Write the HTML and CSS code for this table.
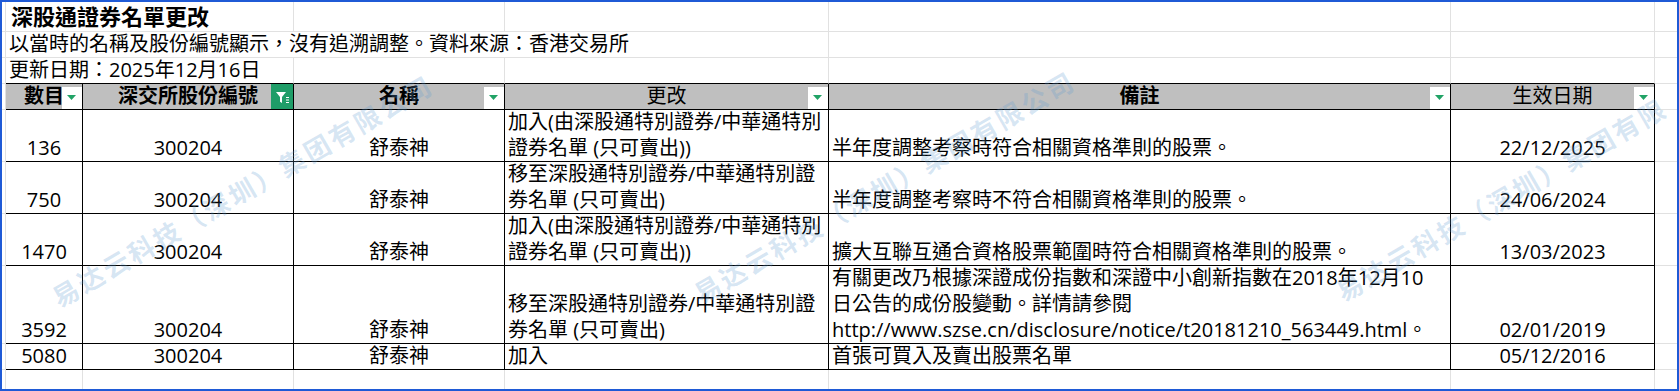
FILE: index.html
```html
<!DOCTYPE html>
<html>

<head>
    <meta charset="utf-8">
    <link rel="stylesheet" href="styles.css">
</head>

<body>

    <div class="sheet">
        <div class="grid">
            <!-- row 1 -->
            <div class="cell gut"></div>
            <div class="cell title span2">深股通證券名單更改</div>
            <div class="cell"></div>
            <div class="cell"></div>
            <div class="cell"></div>
            <div class="cell"></div>
            <div class="cell edge"></div>

            <!-- row 2 -->
            <div class="cell gut"></div>
            <div class="cell span4">以當時的名稱及股份編號顯示，沒有追溯調整。資料來源：香港交易所</div>
            <div class="cell"></div>
            <div class="cell"></div>
            <div class="cell edge"></div>

            <!-- row 3 -->
            <div class="cell gut"></div>
            <div class="cell under span2">更新日期：2025年12月16日</div>
            <div class="cell under"></div>
            <div class="cell under"></div>
            <div class="cell under"></div>
            <div class="cell under"></div>
            <div class="cell edge"></div>

            <!-- header -->
            <div class="cell gut"></div>
            <div class="cell tbl hd">數目<span class="drop"><svg width="10" height="6"><path d="M0 0h9l-4.5 5z" fill="#21a366"/></svg></span></div>
            <div class="cell tbl hd">深交所股份編號<span class="drop on"><svg width="22" height="25"><path d="M5 8h10l-4 5v6l-2-1.2V13z" fill="#fff"/><path d="M15 13.5h3M15 16h3M15 18.5h3" stroke="#fff" stroke-width="1"/></svg></span></div>
            <div class="cell tbl hd">名稱<span class="drop"><svg width="10" height="6"><path d="M0 0h9l-4.5 5z" fill="#21a366"/></svg></span></div>
            <div class="cell tbl hd plain">更改<span class="drop"><svg width="10" height="6"><path d="M0 0h9l-4.5 5z" fill="#21a366"/></svg></span></div>
            <div class="cell tbl hd">備註<span class="drop"><svg width="10" height="6"><path d="M0 0h9l-4.5 5z" fill="#21a366"/></svg></span></div>
            <div class="cell tbl hd plain">生效日期<span class="drop"><svg width="10" height="6"><path d="M0 0h9l-4.5 5z" fill="#21a366"/></svg></span></div>
            <div class="cell edge"></div>

            <!-- data -->
            <div class="cell gut"></div>
            <div class="cell tbl ctr">136</div>
            <div class="cell tbl ctr">300204</div>
            <div class="cell tbl ctr">舒泰神</div>
            <div class="cell tbl">加入(由深股通特別證券/中華通特別<br>證券名單 (只可賣出))</div>
            <div class="cell tbl">半年度調整考察時符合相關資格準則的股票。</div>
            <div class="cell tbl ctr">22/12/2025</div>
            <div class="cell edge"></div>

            <div class="cell gut"></div>
            <div class="cell tbl ctr">750</div>
            <div class="cell tbl ctr">300204</div>
            <div class="cell tbl ctr">舒泰神</div>
            <div class="cell tbl">移至深股通特別證券/中華通特別證<br>券名單 (只可賣出)</div>
            <div class="cell tbl">半年度調整考察時不符合相關資格準則的股票。</div>
            <div class="cell tbl ctr">24/06/2024</div>
            <div class="cell edge"></div>

            <div class="cell gut"></div>
            <div class="cell tbl ctr">1470</div>
            <div class="cell tbl ctr">300204</div>
            <div class="cell tbl ctr">舒泰神</div>
            <div class="cell tbl">加入(由深股通特別證券/中華通特別<br>證券名單 (只可賣出))</div>
            <div class="cell tbl">擴大互聯互通合資格股票範圍時符合相關資格準則的股票。</div>
            <div class="cell tbl ctr">13/03/2023</div>
            <div class="cell edge"></div>

            <div class="cell gut"></div>
            <div class="cell tbl ctr">3592</div>
            <div class="cell tbl ctr">300204</div>
            <div class="cell tbl ctr">舒泰神</div>
            <div class="cell tbl">移至深股通特別證券/中華通特別證<br>券名單 (只可賣出)</div>
            <div class="cell tbl">有關更改乃根據深證成份指數和深證中小創新指數在2018年12月10<br>日公告的成份股變動。詳情請參閱<br>http://www.szse.cn/disclosure/notice/t20181210_563449.html。</div>
            <div class="cell tbl ctr">02/01/2019</div>
            <div class="cell edge"></div>

            <div class="cell gut"></div>
            <div class="cell tbl ctr">5080</div>
            <div class="cell tbl ctr">300204</div>
            <div class="cell tbl ctr">舒泰神</div>
            <div class="cell tbl">加入</div>
            <div class="cell tbl">首張可買入及賣出股票名單</div>
            <div class="cell tbl ctr">05/12/2016</div>
            <div class="cell edge"></div>

            <!-- empty row under the table -->
            <div class="cell gut open"></div>
            <div class="cell open"></div>
            <div class="cell open"></div>
            <div class="cell open"></div>
            <div class="cell open"></div>
            <div class="cell open"></div>
            <div class="cell open"></div>
            <div class="cell edge open"></div>
        </div>

        <span class="wm wm1">易达云科技（深圳）集团有限公司</span>
        <span class="wm wm2">易达云科技（深圳）集团有限公司</span>
        <span class="wm wm3">易达云科技（深圳）集团有限</span>
    </div>

</body>

</html>
```

FILE: styles.css
```css
body {
    margin: 0;
    font-family: "Open Sans", "Noto Sans CJK TC", sans-serif;
    font-size: 20px;
    color: #000;
    background-color: #fff;
}

.sheet {
    position: relative;
    width: 1679px;
    height: 391px;
    box-sizing: border-box;
    border: 2px solid #1f5ad6;
    overflow: hidden;
}

.grid {
    display: grid;
    grid-template-columns: 4px 77px 211px 211px 324px 622px 204px 1fr;
    grid-template-rows: 30px 26px 26px 26px 52px 52px 52px 78px 26px 1fr;
    height: 100%;
}

.cell {
    box-sizing: border-box;
    min-width: 0;
    display: flex;
    flex-direction: column;
    justify-content: flex-end;
    padding: 0 3px;
    line-height: 26px;
    white-space: nowrap;
    border-right: 1px solid #e1e1e1;
    border-bottom: 1px solid #e1e1e1;
}

.span2 {
    grid-column: span 2;
}

.span4 {
    grid-column: span 4;
}

.gut {
    padding: 0;
}

.edge {
    border-right: none;
}

.open {
    border-bottom: none;
}

.under {
    border-bottom-color: #000;
}

.tbl {
    border-right-color: #000;
    border-bottom-color: #000;
}

.title {
    font-size: 22px;
    font-weight: bold;
    padding: 0 3px 2px 5px;
}

.ctr {
    text-align: center;
}

.hd {
    position: relative;
    background-color: #bfbfbf;
    font-weight: bold;
    text-align: center;
}

.hd.plain {
    font-weight: normal;
}

.drop {
    position: absolute;
    right: 0;
    bottom: 0;
    width: 20px;
    height: 22px;
    background-color: #fff;
    display: flex;
    align-items: center;
    justify-content: center;
}

.drop svg {
    display: block;
}

.drop.on {
    width: 22px;
    height: 25px;
    background-color: #1f9d68;
}

/* watermark over the sheet */
.wm {
    position: absolute;
    font-family: "Noto Sans CJK SC", sans-serif;
    font-size: 26px;
    font-weight: bold;
    letter-spacing: 3px;
    line-height: 30px;
    white-space: nowrap;
    color: rgba(95, 155, 210, 0.26);
    transform: rotate(-30deg);
    transform-origin: 0 50%;
    pointer-events: none;
}

.wm1 {
    left: 52px;
    top: 282px;
}

.wm2 {
    left: 694px;
    top: 278px;
}

.wm3 {
    left: 1336px;
    top: 276px;
}
```
